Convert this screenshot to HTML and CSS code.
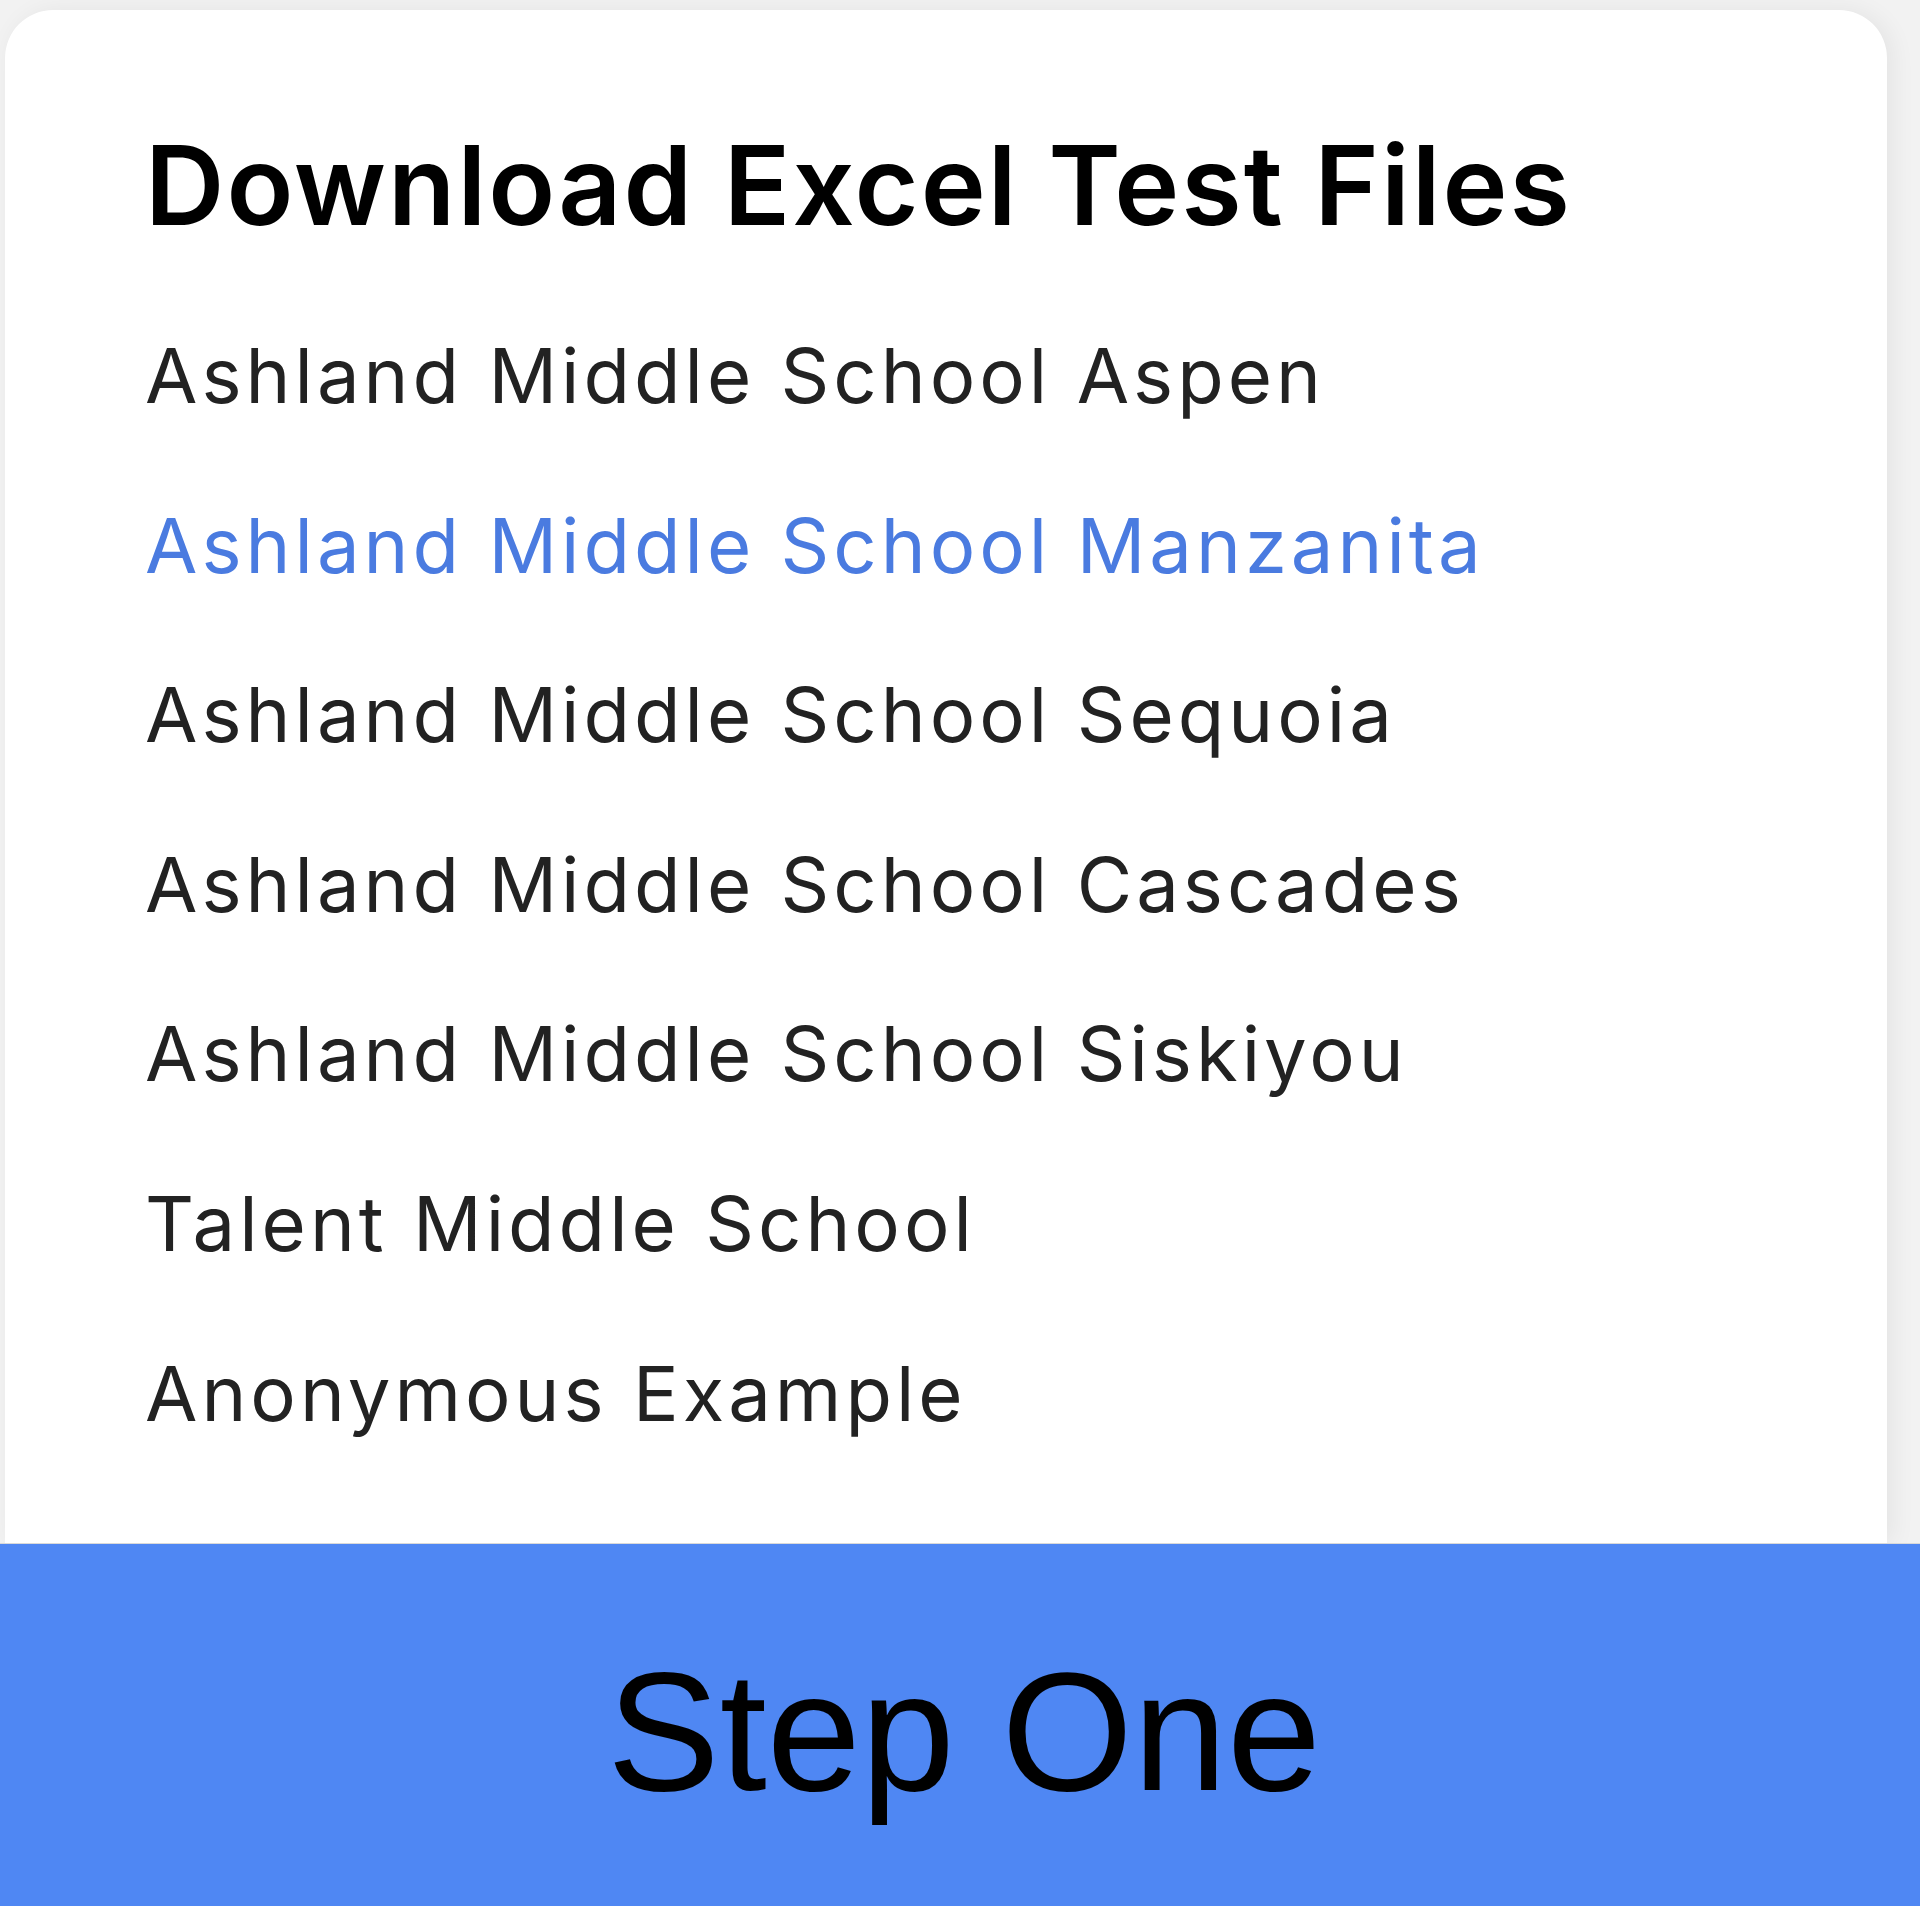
FILE: index.html
```html
<!DOCTYPE html>
<html lang="en">
<head>
<meta charset="utf-8">
<title>Download Excel Test Files</title>
<link rel="stylesheet" href="styles.css">
</head>
<body>
<div class="page">
  <main class="card">
    <h1 class="title">Download Excel Test Files</h1>
    <ul class="files">
      <li class="file">Ashland Middle School Aspen</li>
      <li class="file file--active">Ashland Middle School Manzanita</li>
      <li class="file">Ashland Middle School Sequoia</li>
      <li class="file">Ashland Middle School Cascades</li>
      <li class="file">Ashland Middle School Siskiyou</li>
      <li class="file">Talent Middle School</li>
      <li class="file">Anonymous Example</li>
    </ul>
  </main>
  <footer class="step">
    <span class="step-label">Step One</span>
  </footer>
</div>
</body>
</html>
```

FILE: styles.css
```css
html, body {
  margin: 0;
  padding: 0;
}
body {
  background: #f2f2f2;
  font-family: Inter, "Noto Sans", sans-serif;
  overflow: hidden;
}
.page {
  height: 1906px;
  display: flex;
  flex-direction: column;
}
.card {
  flex: 1;
  margin: 10px 33px 0 5px;
  background: #ffffff;
  border-radius: 48px 48px 0 0;
  box-shadow: 6px 0 24px rgba(0, 0, 0, 0.06);
  padding: 109px 0 0 140px;
  box-sizing: border-box;
}
.title {
  margin: 0;
  font-size: 110px;
  line-height: 132px;
  font-weight: 600;
  color: #000;
  letter-spacing: 2px;
}
.files {
  list-style: none;
  margin: 40px 0 0 0;
  padding: 0;
}
.file {
  font-size: 76px;
  line-height: 169.6px;
  font-weight: 400;
  color: #222222;
  letter-spacing: 4px;
}
.file--active {
  color: #4a7be0;
}
.step {
  height: 363px;
  flex: none;
  background: #4f87f3;
  border-top: 1px solid #d9d9d9;
  display: flex;
  align-items: center;
  justify-content: center;
  padding: 14px 0 0 8px;
  box-sizing: border-box;
}
.step-label {
  font-family: "Liberation Sans", Arial, sans-serif;
  font-size: 169px;
  color: #000;
  line-height: 1.15;
}
```
